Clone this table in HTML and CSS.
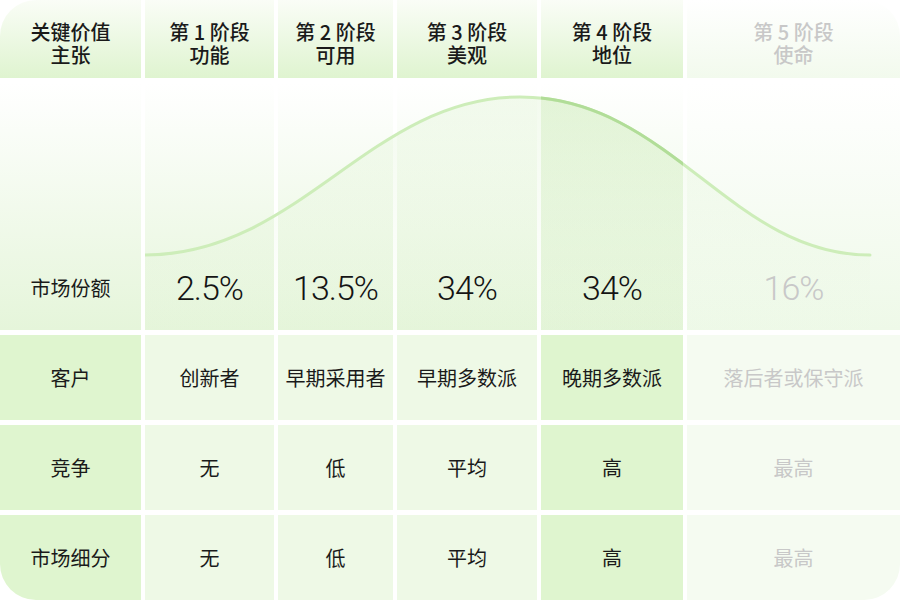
FILE: index.html
```html
<!DOCTYPE html>
<html lang="zh-CN">
<head>
<meta charset="utf-8">
<title>关键价值主张</title>
<link rel="stylesheet" href="styles.css">
</head>
<body>
<div class="table">
  <div class="c hd">关键价值<br>主张</div>
  <div class="c hd">第 1 阶段<br>功能</div>
  <div class="c hd">第 2 阶段<br>可用</div>
  <div class="c hd">第 3 阶段<br>美观</div>
  <div class="c hd">第 4 阶段<br>地位</div>
  <div class="c hd fade">第 5 阶段<br>使命</div>

  <div class="c mk"><span class="lbl">市场份额</span></div>
  <div class="c mk"><span class="num">2.5%</span></div>
  <div class="c mk"><span class="num">13.5%</span></div>
  <div class="c mk"><span class="num">34%</span></div>
  <div class="c mk"><span class="num">34%</span></div>
  <div class="c mk fade"><span class="num">16%</span></div>

  <div class="c lab">客户</div>
  <div class="c val">创新者</div>
  <div class="c val">早期采用者</div>
  <div class="c val">早期多数派</div>
  <div class="c val hi">晚期多数派</div>
  <div class="c val fade">落后者或保守派</div>

  <div class="c lab">竞争</div>
  <div class="c val">无</div>
  <div class="c val">低</div>
  <div class="c val">平均</div>
  <div class="c val hi">高</div>
  <div class="c val fade">最高</div>

  <div class="c lab">市场细分</div>
  <div class="c val">无</div>
  <div class="c val">低</div>
  <div class="c val">平均</div>
  <div class="c val hi">高</div>
  <div class="c val fade">最高</div>

  <svg class="curve" width="755" height="247" viewBox="0 0 755 247" aria-hidden="true">
    <defs>
      <linearGradient id="area" x1="0" y1="0" x2="0" y2="1">
        <stop offset="0" stop-color="#d3eec2" stop-opacity="0.28"/>
        <stop offset="1" stop-color="#dcf2cf" stop-opacity="0.02"/>
      </linearGradient>
      <linearGradient id="areaHi" x1="0" y1="0" x2="0" y2="1">
        <stop offset="0" stop-color="#cdebb8" stop-opacity="0.4"/>
        <stop offset="1" stop-color="#d6f0c6" stop-opacity="0.12"/>
      </linearGradient>
      <clipPath id="col5"><rect x="396" y="0" width="142" height="247"/></clipPath>
    </defs>
    <path d="M0,172 C155,172 225,14 375,14 C525,14 585,172 725,172 L725,247 L0,247 Z" fill="url(#area)"/>
    <path d="M0,172 C155,172 225,14 375,14 C525,14 585,172 725,172" fill="none" stroke="#cdedb9" stroke-width="3" stroke-linecap="round"/>
    <g clip-path="url(#col5)">
      <path d="M0,172 C155,172 225,14 375,14 C525,14 585,172 725,172 L725,247 L0,247 Z" fill="url(#areaHi)"/>
      <path d="M0,172 C155,172 225,14 375,14 C525,14 585,172 725,172" fill="none" stroke="#b1dd98" stroke-width="3"/>
    </g>
  </svg>
</div>
</body>
</html>
```

FILE: styles.css
```css
html, body {
  margin: 0;
  padding: 0;
  background: #ffffff;
}

body {
  font-family: "Noto Sans CJK SC", "Noto Sans", sans-serif;
  color: #1a1a1a;
}

.table {
  position: relative;
  width: 900px;
  height: 600px;
  display: grid;
  grid-template-columns: 141px 129px 115px 140px 142px 213px;
  grid-template-rows: 78px 247px 85px 85px 85px;
  column-gap: 4px;
  row-gap: 5px;
  border-radius: 36px;
  overflow: hidden;
}

.c {
  display: flex;
  align-items: center;
  justify-content: center;
  text-align: center;
  font-size: 20px;
  line-height: 28px;
}

.hd {
  font-weight: 500;
  line-height: 23px;
  padding-top: 8px;
  box-sizing: border-box;
  background: linear-gradient(180deg, #fafdf7 0%, #dff4d0 100%);
}

.hd.fade {
  background: linear-gradient(180deg, #ffffff 0%, #f2faed 100%);
}

.mk {
  align-items: flex-end;
  padding-bottom: 24px;
  box-sizing: border-box;
  background: linear-gradient(180deg, #ffffff 0%, #e5f5da 100%);
}

.mk.fade {
  background: linear-gradient(180deg, #ffffff 0%, #eef9e8 100%);
}

.lbl,
.num {
  position: relative;
  z-index: 2;
}

.lbl {
  line-height: 36px;
}

.num {
  font-family: "Roboto", "Noto Sans", sans-serif;
  font-weight: 300;
  font-size: 34px;
  line-height: 36px;
  letter-spacing: -1px;
  color: #141414;
}

.fade .num {
  color: #c8c8c8;
}

.lab {
  background: #dff5cf;
}

.val {
  background: #eef9e6;
}

.val.hi {
  background: #dff5cf;
}

.val.fade {
  background: #f5fbf1;
}

.fade {
  color: #c8c8c8;
}

.curve {
  position: absolute;
  left: 145px;
  top: 83px;
  z-index: 1;
  pointer-events: none;
}
```
